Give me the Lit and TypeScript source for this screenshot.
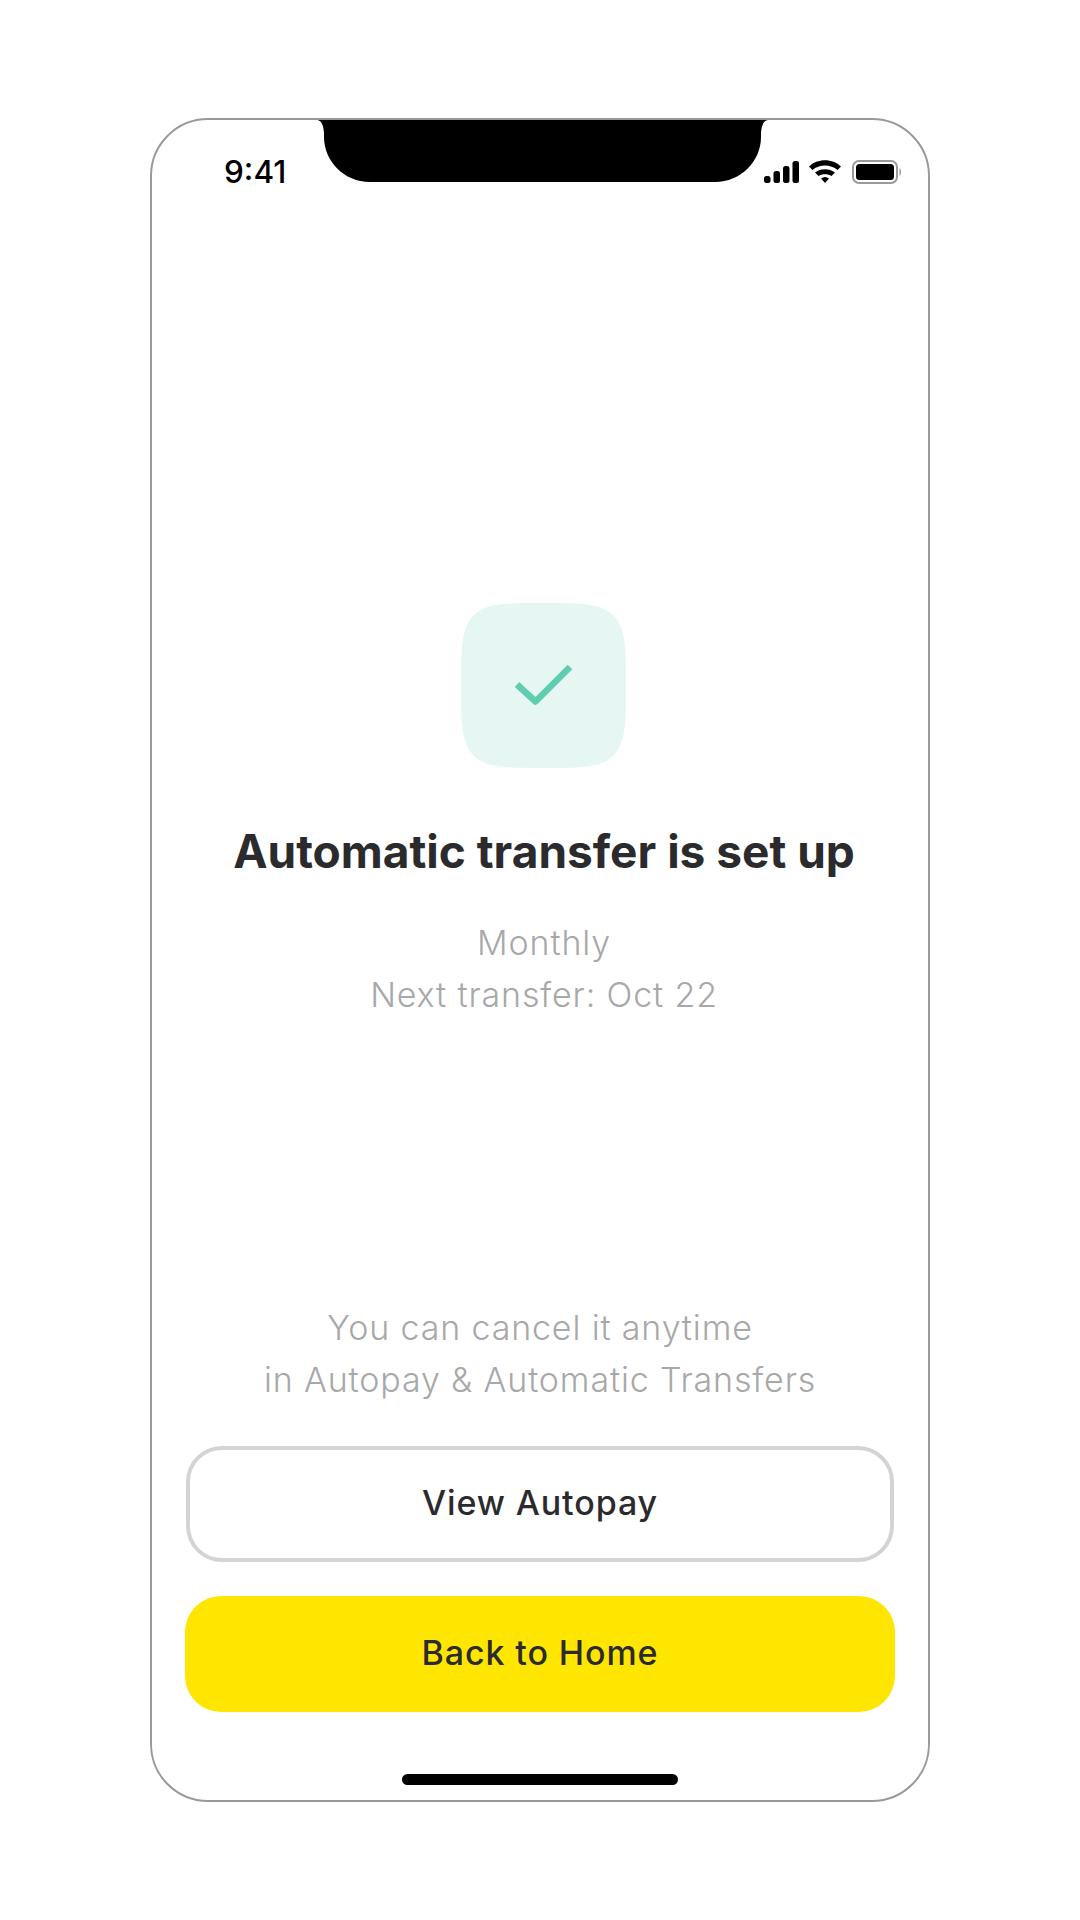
import { html, css, LitElement } from 'lit'
import { customElement } from 'lit/decorators.js'

@customElement('app-root')
export class AppRoot extends LitElement {
  static styles = css`
    :host {
      display: block;
      width: 1080px;
      height: 1920px;
      background: #fff;
      font-family: Inter, "Liberation Sans", sans-serif;
    }
    .page {
      display: flex;
      justify-content: center;
      padding-top: 118px;
    }
    .phone {
      position: relative;
      box-sizing: border-box;
      width: 780px;
      height: 1684px;
      border: 2px solid #999;
      border-radius: 58px;
      display: flex;
      flex-direction: column;
      align-items: center;
      overflow: hidden;
    }
    .notch {
      position: absolute;
      top: 0;
      left: 165px;
      display: block;
    }
    .status {
      align-self: stretch;
      box-sizing: border-box;
      height: 100px;
      padding: 0 26px 0 72px;
      display: flex;
      align-items: center;
      justify-content: space-between;
      color: #000;
    }
    .time {
      font-size: 31.5px;
      font-weight: 550;
      line-height: 36px;
      padding-top: 4px;
    }
    .status-icons {
      display: block;
      margin-top: 2px;
    }
    .main {
      display: flex;
      flex-direction: column;
      align-items: center;
      margin-top: 383px;
      margin-left: 8px;
    }
    .badge {
      display: block;
      width: 165px;
      height: 165px;
    }
    .title {
      margin: 56px 0 0;
      font-size: 46px;
      line-height: 54px;
      font-weight: 700;
      color: #2b2b2e;
    }
    .sub {
      margin: 39px 0 0;
      font-size: 34px;
      line-height: 52px;
      letter-spacing: 0.85px;
      font-weight: 300;
      color: #a8a8a8;
      text-align: center;
    }
    .note {
      margin: auto 0 40px;
      font-size: 34px;
      line-height: 52px;
      letter-spacing: 0.85px;
      font-weight: 300;
      color: #a8a8a8;
      text-align: center;
    }
    .btn {
      box-sizing: border-box;
      width: 710px;
      height: 116px;
      padding-bottom: 3px;
      border-radius: 36px;
      display: flex;
      align-items: center;
      justify-content: center;
      font-size: 34px;
      letter-spacing: 0.9px;
      font-weight: 500;
      color: #2b2b2e;
    }
    .btn.outline {
      border: 4px solid #d4d4d4;
      width: 708px;
      background: #fff;
    }
    .btn.primary {
      margin-top: 34px;
      background: #ffe600;
    }
    .home {
      width: 276px;
      height: 11px;
      border-radius: 6px;
      background: #000;
      margin: 62px 0 15px;
    }
  `

  render() {
    return html`
      <div class="page">
        <div class="phone">
          <svg class="notch" width="451" height="62" viewBox="0 0 451 62">
            <path d="M0 0H451C447 0 444.500 5 444 13V17C444 41 424 62 398 62H53C27 62 7 41 7 17V13C6.500 5 4 0 0 0Z" fill="#000"/>
          </svg>
          <div class="status">
            <span class="time">9:41</span>
            <svg class="status-icons" width="138" height="26" viewBox="0 0 138 26">
              <rect x="0" y="18" width="6.500" height="7" rx="2.500" fill="#000"/>
              <rect x="9.500" y="13" width="6.500" height="12" rx="2.500" fill="#000"/>
              <rect x="19" y="8" width="6.500" height="17" rx="2.500" fill="#000"/>
              <rect x="28.500" y="3" width="6.500" height="22" rx="2.500" fill="#000"/>
              <path d="M45 8.500C53 0 69 0 77 8.500L73.500 12C67 6 55 6 48.500 12Z" fill="#000"/>
              <path d="M51 14.500C56.500 10 65.500 10 71 14.500L67.500 18C64 15.500 58 15.500 54.500 18Z" fill="#000"/>
              <path d="M57 20.500C59.500 18.500 62.500 18.500 65 20.500L61 25Z" fill="#000"/>
              <rect x="89" y="3" width="44" height="22" rx="6" fill="none" stroke="#9a9a9a" stroke-width="2"/>
              <rect x="92" y="6" width="38" height="16" rx="3.500" fill="#000"/>
              <path d="M135.500 10C137.500 11 137.500 17 135.500 18Z" fill="#9a9a9a"/>
            </svg>
          </div>
          <div class="main">
            <svg class="badge" viewBox="0 0 165 165">
              <path d="M82.500 0C118 0 140 0 152 12C165 25 165 47 165 82.500C165 118 165 140 152 153C140 165 118 165 82.500 165C47 165 25 165 13 153C0 140 0 118 0 82.500C0 47 0 25 13 12C25 0 47 0 82.500 0Z" fill="#e6f6f2"/>
              <path d="M56 81.500L74.500 98.500L109 64" fill="none" stroke="#5fceb0" stroke-width="6.500" stroke-linejoin="round"/>
            </svg>
            <h1 class="title">Automatic transfer is set up</h1>
            <div class="sub">Monthly<br />Next transfer: Oct 22</div>
          </div>
          <div class="note">You can cancel it anytime<br />in Autopay &amp; Automatic Transfers</div>
          <div class="btn outline">View Autopay</div>
          <div class="btn primary">Back to Home</div>
          <div class="home"></div>
        </div>
      </div>
    `
  }
}

declare global {
  interface HTMLElementTagNameMap {
    'app-root': AppRoot
  }
}
